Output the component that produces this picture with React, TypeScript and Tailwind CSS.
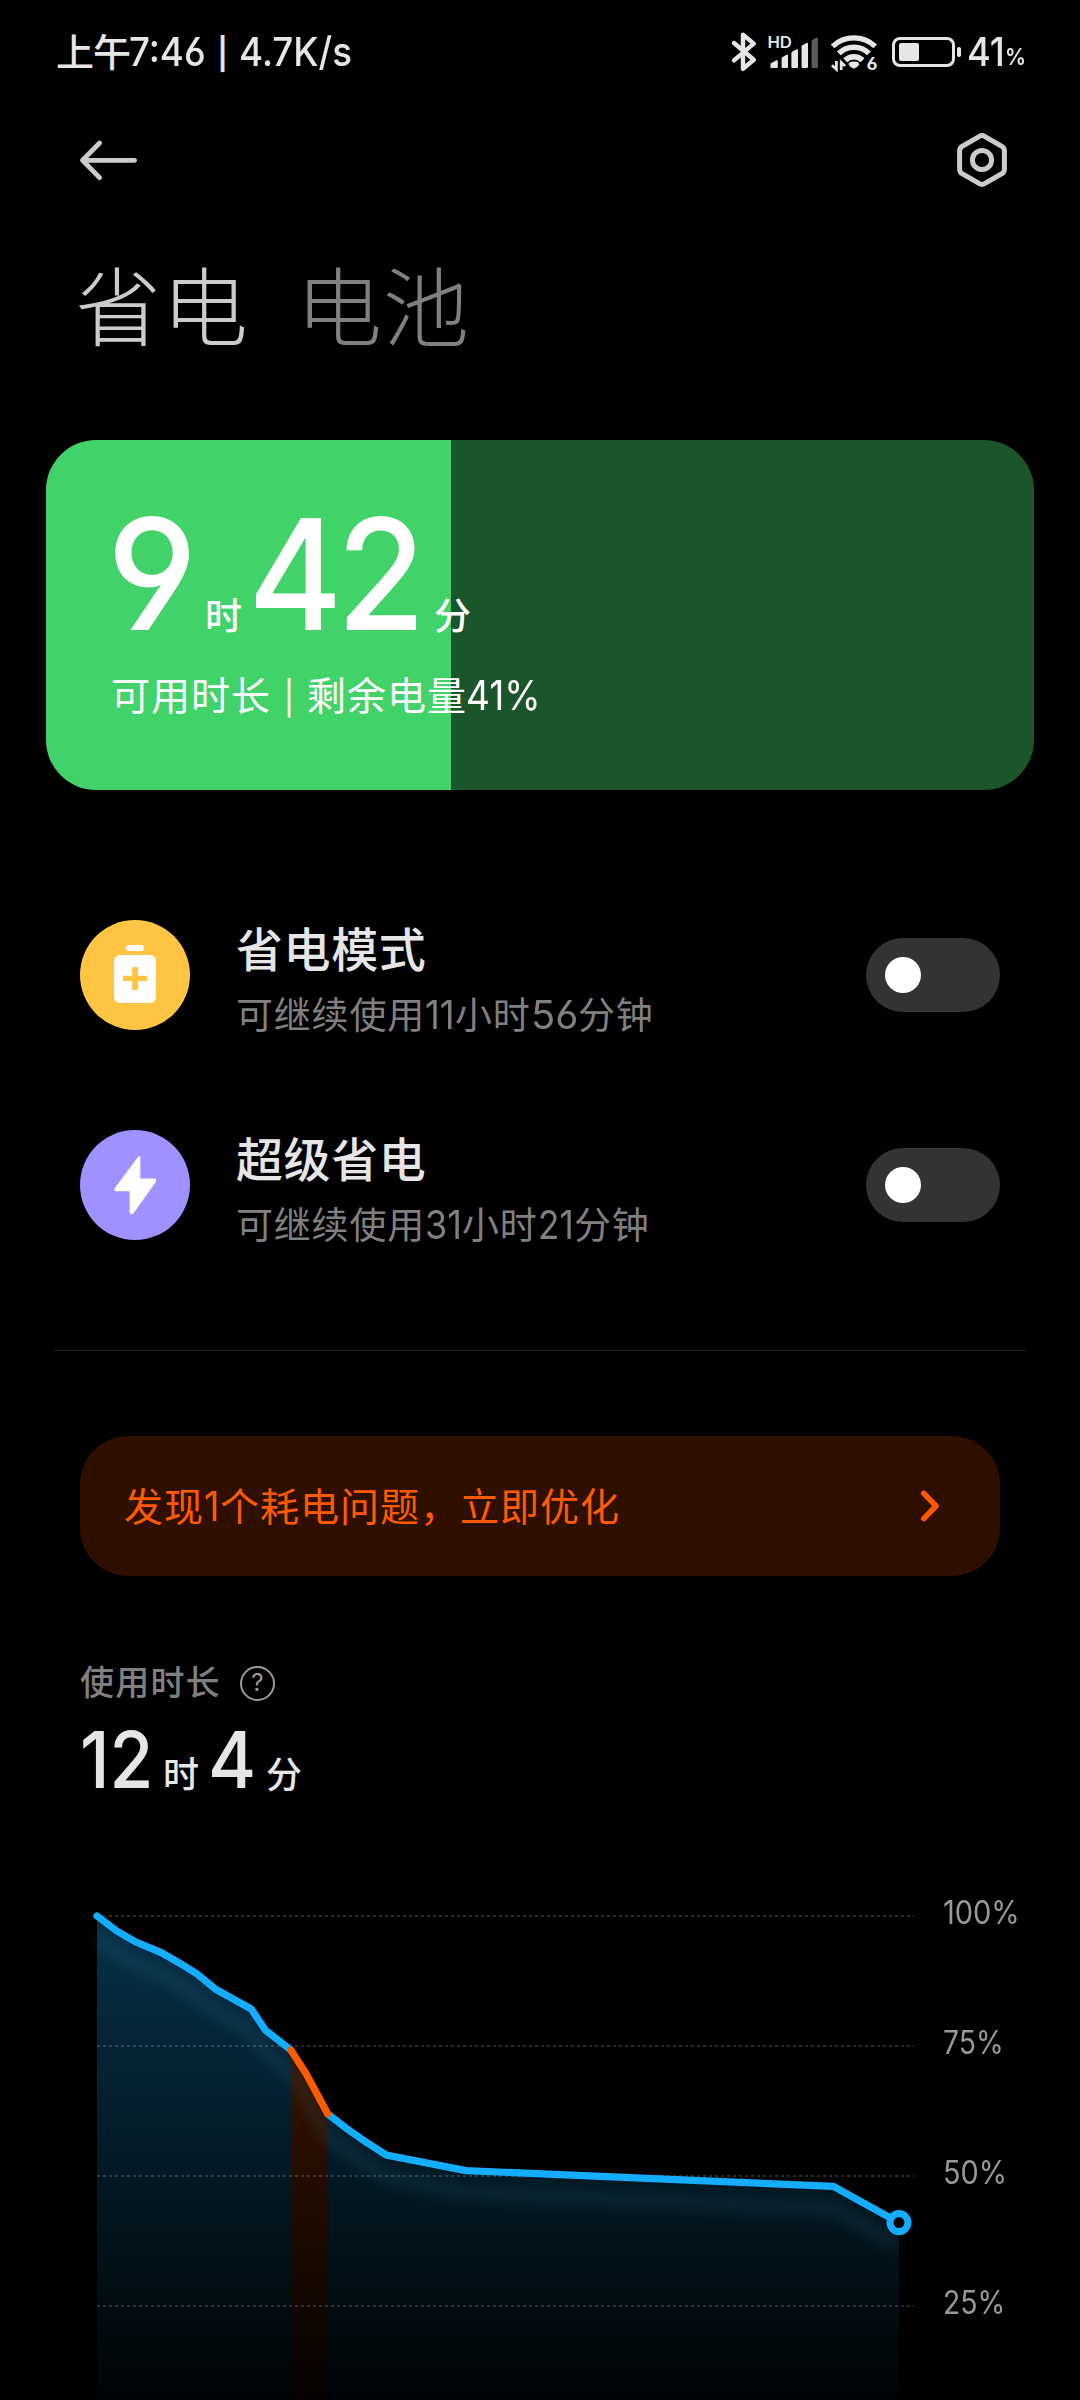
import { useLayoutEffect, useRef, useState } from 'react';

/** Text that is condensed or widened to fill exactly the given advance width. */
function Fit({ width, className = '', children }: { width: number; className?: string; children: string }) {
  const ref = useRef<HTMLSpanElement>(null);
  const [scale, setScale] = useState(1);
  useLayoutEffect(() => {
    if (ref.current && ref.current.offsetWidth > 0) setScale(width / ref.current.offsetWidth);
  }, [width, children]);
  return (
    <span className={'inline-block shrink-0 whitespace-nowrap ' + className} style={{ width }}>
      <span ref={ref} className="inline-block origin-left" style={{ transform: `scaleX(${scale})` }}>
        {children}
      </span>
    </span>
  );
}

function StatusBar() {
  return (
    <div className="flex h-[103px] items-center justify-between pl-[56px] text-[#e6e6e6]">
      <div className="flex items-baseline text-[40px] leading-[50px] font-medium">
        <span className="w-[73px] text-[38px] tracking-[-1px] whitespace-nowrap">上午</span>
        <Fit width={77}>7:46</Fit>
        <span className="relative -top-px w-[33px] text-center text-[31px] leading-none font-semibold">|</span>
        <Fit width={113}>4.7K/s</Fit>
      </div>
      <div className="flex items-center pr-[54px]">
        <svg className="h-[44px] w-[28px]" viewBox="730 30 28 44" fill="none" stroke="#e6e6e6" strokeWidth="4.4" strokeLinecap="round" strokeLinejoin="round">
          <path d="M734 43 L753.8 59.8 L743 68.8 V34.6 L753.8 43.6 L734 60.4" />
        </svg>
        <svg className="ml-2 h-[44px] w-[54px]" viewBox="766 30 54 44">
          <text x="767.4" y="48.3" fill="#e6e6e6" fontSize="16" fontWeight="600" textLength="24.5" lengthAdjust="spacingAndGlyphs">HD</text>
          <g fill="#e6e6e6">
            <path d="M770.4 67 q0 1 1 1 h5.4 q1 0 1-1 v-5.6 q0-1.6-1.4-1.1 l-5 2.6 q-1 .5-1 1.5z" />
            <path d="M781.6 67 q0 1 1 1 h4.4 q1 0 1-1 v-11.2 q0-1.6-1.4-1.1 l-4 2.2 q-1 .5-1 1.5z" />
            <path d="M791.4 67 q0 1 1 1 h4.6 q1 0 1-1 v-16.6 q0-1.6-1.4-1.1 l-4.2 2.2 q-1 .5-1 1.5z" />
            <path d="M801.6 67 q0 1 1 1 h4.4 q1 0 1-1 v-23 q0-1.6-1.4-1.1 l-4 2.2 q-1 .5-1 1.5z" />
          </g>
          <path fill="#5c5c5c" d="M811.6 67 q0 1 1 1 h4.4 q1 0 1-1 v-28.4 q0-1.6-1.4-1.1 l-4 2.2 q-1 .5-1 1.5z" />
        </svg>
        <svg className="ml-[9px] h-[44px] w-[50px]" viewBox="829 30 50 44">
          <g fill="none" stroke="#e6e6e6" strokeWidth="5.4">
            <path d="M832.6 46.4 A31 31 0 0 1 875.2 46.4" />
            <path d="M838.8 53.4 A21.5 21.5 0 0 1 869 53.4" />
            <path d="M845.2 60.2 A12.5 12.5 0 0 1 862.6 60.2" />
          </g>
          <path fill="#e6e6e6" d="M848.6 64.6 q0-3.2 5.3-3.2 q5.3 0 5.3 3.2 q-1.6 3.4-5.3 4.2 q-3.7-.8-5.3-4.2z" />
          <path d="M836.4 61 V69.4 L832 65.2 M841.2 70 V62.4 L845 66" fill="none" stroke="#e6e6e6" strokeWidth="2.7" />
          <text x="866.6" y="70" fill="#e6e6e6" fontSize="17.5" fontWeight="700" textLength="11" lengthAdjust="spacingAndGlyphs">6</text>
        </svg>
        <svg className="ml-3 h-[44px] w-[71px]" viewBox="891 30 71 44">
          <rect x="893.5" y="38.5" width="60" height="27" rx="6.5" fill="none" stroke="#e6e6e6" strokeWidth="3" />
          <rect x="899" y="43" width="20" height="18" rx="2" fill="#e6e6e6" />
          <rect x="957" y="47" width="4" height="10" rx="1.8" fill="#e6e6e6" />
        </svg>
        <div className="ml-[5px] flex items-baseline leading-[50px] font-medium">
          <Fit width={38} className="text-[40px]">41</Fit>
          <Fit width={21} className="relative -top-px text-[23px] leading-none font-semibold">%</Fit>
        </div>
      </div>
    </div>
  );
}

function Header() {
  return (
    <div className="flex h-[114px] items-center justify-between pr-[70px] pl-[77px]">
      <svg className="h-[46px] w-[63px]" viewBox="77 137 63 46" fill="none" stroke="#cccccc" strokeWidth="4.8" strokeLinecap="round" strokeLinejoin="round">
        <path d="M134.6 160.3 H82.5 M99.6 143 L82.5 160.3 L99.6 177.6" />
      </svg>
      <svg className="h-[60px] w-[56px]" viewBox="954 130 56 60" fill="none" stroke="#cccccc" strokeWidth="5" strokeLinejoin="round">
        <path d="M979.4 136.3 Q982 134.8 984.6 136.3 L1001.9 146.3 Q1004.4 147.8 1004.4 150.8 V169.2 Q1004.4 172.2 1001.9 173.7 L984.6 183.7 Q982 185.2 979.4 183.7 L962.1 173.7 Q959.6 172.2 959.6 169.2 V150.8 Q959.6 147.8 962.1 146.3 Z" />
        <circle cx="982" cy="160" r="9.6" />
      </svg>
    </div>
  );
}

function ModeRow({ icon, color, title, children }: { icon: React.ReactNode; color: string; title: string; children: React.ReactNode }) {
  return (
    <div className="flex h-[110px] items-start">
      <div className={'flex size-[110px] items-center justify-center rounded-full ' + color}>{icon}</div>
      <div className="ml-[46px] flex-1 whitespace-nowrap">
        <div className="text-[47px] leading-[60px] font-medium tracking-[0.6px] text-[#e6e6e6]">{title}</div>
        <div className="mt-[10px] flex items-baseline text-[37px] leading-[50px] tracking-[0.8px] text-[#808080]">{children}</div>
      </div>
      <div className="mt-[18px] flex h-[74px] w-[134px] items-center rounded-full bg-[#333333] pl-[19px]">
        <div className="size-9 rounded-full bg-white" />
      </div>
    </div>
  );
}

const start = '97,1916 117.3,1931.3 136,1942 161.3,1952.6 180,1963.3 196.7,1973.6 216,1989.5 251.3,2009 265.3,2030 290.8,2050';
const drain = '290.8,2050 306,2073.5 327.7,2113.8';
const rest = '327.7,2113.8 346.7,2128.6 366,2142 386.3,2155 466,2170.6 833.3,2186.4 899,2222.6';

function Chart() {
  return (
    <svg className="h-[552px] w-[930px] shrink-0" viewBox="0 1848 930 552" fill="none">
      <defs>
        <linearGradient id="blueFill" gradientUnits="userSpaceOnUse" x1="0" y1="1916" x2="0" y2="2435">
          <stop offset="0" stopColor="#14adff" stopOpacity="0.28" />
          <stop offset="1" stopColor="#14adff" stopOpacity="0" />
        </linearGradient>
        <linearGradient id="orangeFill" gradientUnits="userSpaceOnUse" x1="0" y1="1916" x2="0" y2="2435">
          <stop offset="0" stopColor="#ff5a00" stopOpacity="0.28" />
          <stop offset="1" stopColor="#ff5a00" stopOpacity="0" />
        </linearGradient>
        <filter id="glow" filterUnits="userSpaceOnUse" x="60" y="1880" width="880" height="520">
          <feGaussianBlur stdDeviation="6.5" />
        </filter>
      </defs>
      <polygon points={start + ' 290.8,2440 97,2440'} fill="url(#blueFill)" />
      <polygon points={drain + ' 327.7,2440 290.8,2440'} fill="url(#orangeFill)" />
      <polygon points={rest + ' 899,2440 327.7,2440'} fill="url(#blueFill)" />
      <g transform="translate(0 22)">
        <polyline points={start + ' ' + drain + ' ' + rest} stroke="#50b4d8" strokeOpacity="0.1" strokeWidth="15" filter="url(#glow)" />
      </g>
      {[1916, 2046, 2176, 2306].map((y) => (
        <path key={y} d={`M97 ${y} H914`} stroke="#ffffff" strokeOpacity="0.17" strokeWidth="2" strokeDasharray="3 3" />
      ))}
      <polyline points={start} stroke="#14adff" strokeWidth="7.2" strokeLinecap="round" />
      <polyline points={rest} stroke="#14adff" strokeWidth="7.2" strokeLinecap="round" />
      <polyline points={drain} stroke="#ff5a00" strokeWidth="7.2" strokeLinecap="round" strokeLinejoin="round" />
      <circle cx="899" cy="2222.6" r="9" fill="#000000" stroke="#14adff" strokeWidth="7" />
    </svg>
  );
}

export default function App() {
  return (
    <div className="h-[2400px] w-[1080px] overflow-hidden bg-black font-['Inter','Noto_Sans_CJK_SC',sans-serif] [font-feature-settings:'cv03','cv04']">
      <StatusBar />
      <Header />

      <div className="mt-[42px] flex gap-[47px] pl-[75px] text-[86px] leading-[100px] font-light tracking-[1px] whitespace-nowrap">
        <span className="text-[#cccccc]">省电</span>
        <span className="text-[#808080]">电池</span>
      </div>

      <div className="mx-[46px] mt-[81px] h-[350px] overflow-hidden rounded-[50px] bg-[linear-gradient(to_right,#41d36a_405px,#1b552b_405px)] pt-[57px] text-white">
        <div className="flex items-baseline pl-[61px] text-[154px] leading-[154px] font-medium">
          <Fit width={90}>9</Fit>
          <span className="ml-[8px] w-[37px] text-[37px] leading-none">时</span>
          <Fit width={172} className="ml-[6px] tracking-[-6px]">42</Fit>
          <span className="ml-[14px] text-[37px] leading-none">分</span>
        </div>
        <div className="mt-[19px] flex items-baseline pl-[65px] text-[39px] leading-[50px] whitespace-nowrap">
          <span className="w-[160px] tracking-[1px]">可用时长</span>
          <span className="w-[36px] text-center text-[33px] leading-none">|</span>
          <span className="w-[159px] tracking-[1px]">剩余电量</span>
          <Fit width={75} className="text-[41px]">41%</Fit>
        </div>
      </div>

      <div className="mt-[130px] flex flex-col gap-[100px] px-[80px]">
        <ModeRow
          color="bg-[#ffc542]"
          title="省电模式"
          icon={
            <svg className="size-[110px]" viewBox="80 920 110 110">
              <rect x="126" y="945" width="18" height="6" rx="3" fill="#fff" />
              <rect x="114" y="955" width="42" height="48" rx="6" fill="#fff" />
              <rect x="123" y="975.7" width="24" height="5.4" rx="0.8" fill="#ffc542" />
              <rect x="132.2" y="967" width="5.8" height="23" rx="0.8" fill="#ffc542" />
            </svg>
          }
        >
          <span className="w-[189px]">可继续使用</span>
          <Fit width={30} className="text-[39px] tracking-normal">11</Fit>
          <span className="w-[76px]">小时</span>
          <Fit width={47} className="text-[39px] tracking-normal">56</Fit>
          <span>分钟</span>
        </ModeRow>
        <ModeRow
          color="bg-[#9d92ff]"
          title="超级省电"
          icon={
            <svg className="size-[110px]" viewBox="80 1130 110 110">
              <path d="M138.4 1157.4 L115.2 1188.6 Q114.4 1190.4 116.2 1190.6 H130.2 V1212 Q131 1214.6 132.8 1213.2 L155.4 1181.6 Q156.2 1179.4 154.4 1179.2 H139.8 V1157.6 Q139.4 1155.8 138.4 1157.4z" fill="#fff" stroke="#fff" strokeWidth="1.2" strokeLinejoin="round" />
            </svg>
          }
        >
          <span className="w-[189px]">可继续使用</span>
          <Fit width={37} className="text-[39px] tracking-normal">31</Fit>
          <span className="w-[76px]">小时</span>
          <Fit width={36} className="text-[39px] tracking-normal">21</Fit>
          <span>分钟</span>
        </ModeRow>
      </div>

      <div className="mx-[54px] mt-[110px] h-px bg-[#262626]" />

      <div className="mx-[80px] mt-[85px] flex h-[140px] items-center justify-between rounded-[48px] bg-[#2e0f00] pr-[60px] pl-[44px] text-[#ff5a00]">
        <div className="flex items-baseline text-[39px] leading-[50px] tracking-[1px] whitespace-nowrap">
          <span>发现</span>
          <Fit width={16} className="text-[41px] tracking-normal">1</Fit>
          <span>个耗电问题，立即优化</span>
        </div>
        <svg className="h-[36px] w-[20px]" viewBox="920 1488 20 36" fill="none" stroke="#ff5a00" strokeWidth="5.6" strokeLinecap="round" strokeLinejoin="round">
          <path d="M923.8 1493.4 L936 1506 L923.8 1518.6" />
        </svg>
      </div>

      <div className="mt-[82px] flex h-[50px] items-center pl-[80px]">
        <span className="w-[160px] text-[34px] leading-[50px] font-medium tracking-[1.2px] text-[#808080]">使用时长</span>
        <span className="flex size-[35px] items-center justify-center rounded-full border-[2.5px] border-[#999999] text-[24px] leading-none text-[#999999]">?</span>
      </div>
      <div className="mt-[13px] flex items-baseline pl-[80px] text-[78px] leading-[78px] font-medium text-[#e6e6e6]">
        <Fit width={73}>12</Fit>
        <span className="ml-[10px] w-[36px] text-[36px] leading-none">时</span>
        <Fit width={48} className="ml-[9px]">4</Fit>
        <span className="ml-[10px] text-[36px] leading-none">分</span>
      </div>

      <div className="mt-[49px] flex">
        <Chart />
        <div className="ml-[13px] flex flex-col text-[32px] leading-[130px] text-[#999999]">
          <Fit width={77}>100%</Fit>
          <Fit width={61}>75%</Fit>
          <Fit width={64}>50%</Fit>
          <Fit width={62}>25%</Fit>
        </div>
      </div>
    </div>
  );
}
